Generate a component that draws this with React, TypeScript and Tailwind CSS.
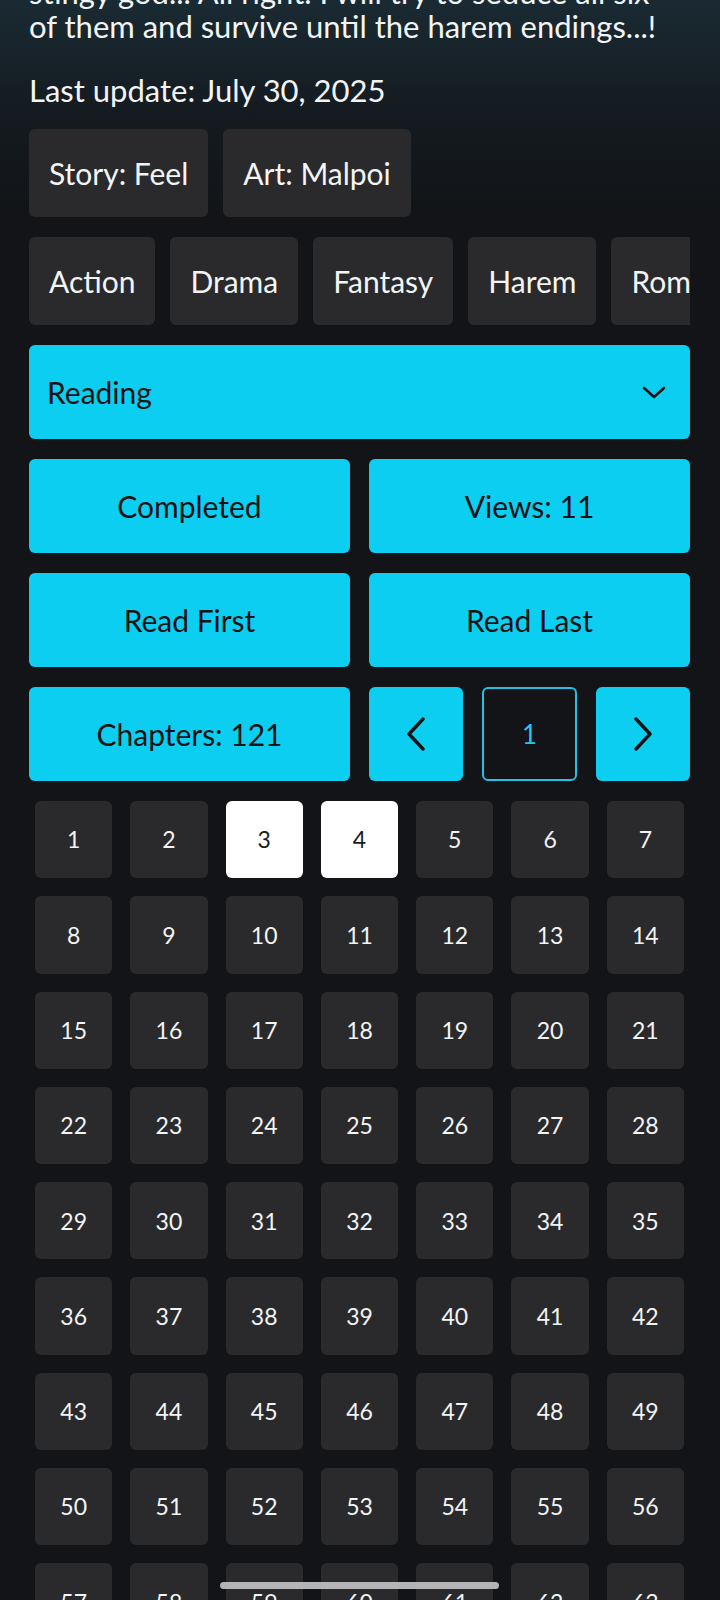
const GENRES = ['Action', 'Drama', 'Fantasy', 'Harem', 'Romance']
const CHAPTERS = Array.from({ length: 121 }, (_, i) => i + 1)
const READ = [3, 4]

function ChevronDown() {
  return (
    <svg width="24" height="13" viewBox="0 0 24 13" fill="none">
      <path d="M2 2L12 11L22 2" stroke="#101214" strokeWidth="2.6" strokeLinecap="round" strokeLinejoin="round" />
    </svg>
  )
}

function Chevron({ dir }: { dir: 'left' | 'right' }) {
  return (
    <svg width="20" height="34" viewBox="0 0 20 34" fill="none">
      <path
        d={dir === 'left' ? 'M17 2L3 17L17 32' : 'M3 2L17 17L3 32'}
        stroke="#101214"
        strokeWidth="3.4"
        strokeLinecap="round"
        strokeLinejoin="round"
      />
    </svg>
  )
}

export default function App() {
  return (
    <div className="relative h-[1600px] overflow-hidden bg-[linear-gradient(to_bottom,#1a2a33_0px,#141a1f_120px,#121417_220px)] font-['Lato',sans-serif] text-[30px] text-[#f3f4f5]">
      <div className="pl-[29px] pr-[30px]">
        <p className="-mt-[25px] text-[31px] leading-[34px]">
          <span className="block whitespace-nowrap">stingy god... All right. I will try to seduce all six</span>
          <span className="block whitespace-nowrap">of them and survive until the harem endings...!</span>
        </p>
        <p className="mt-[30px] text-[31px] leading-[34px]">Last update: July 30, 2025</p>

        <div className="mt-[22px] flex flex-col gap-5">
          <div className="flex gap-[15px]">
            <div className="flex h-[88px] items-center rounded-md bg-[#2a2a2c] px-5">Story: Feel</div>
            <div className="flex h-[88px] items-center rounded-md bg-[#2a2a2c] px-5">Art: Malpoi</div>
          </div>

          <div className="flex gap-[15px] overflow-hidden">
            {GENRES.map((g) => (
              <div key={g} className="flex h-[88px] shrink-0 items-center rounded-md bg-[#2a2a2c] px-5">
                {g}
              </div>
            ))}
          </div>

          <div className="flex h-[94px] items-center justify-between rounded-md bg-[#0ccef0] pl-[18px] pr-6 text-[#101214]">
            <span>Reading</span>
            <ChevronDown />
          </div>

          <div className="grid grid-cols-2 gap-[19px] text-[#101214]">
            <div className="flex h-[94px] items-center justify-center rounded-md bg-[#0ccef0]">Completed</div>
            <div className="flex h-[94px] items-center justify-center rounded-md bg-[#0ccef0]">Views: 11</div>
          </div>

          <div className="grid grid-cols-2 gap-[19px] text-[#101214]">
            <div className="flex h-[94px] items-center justify-center rounded-md bg-[#0ccef0]">Read First</div>
            <div className="flex h-[94px] items-center justify-center rounded-md bg-[#0ccef0]">Read Last</div>
          </div>

          <div className="grid grid-cols-2 gap-[19px] text-[#101214]">
            <div className="flex h-[94px] items-center justify-center rounded-md bg-[#0ccef0]">Chapters: 121</div>
            <div className="grid grid-cols-3 gap-[19px]">
              <div className="flex h-[94px] items-center justify-center rounded-md bg-[#0ccef0]">
                <Chevron dir="left" />
              </div>
              <div className="flex h-[94px] items-center justify-center rounded-md border-2 border-[#22c2e4] text-[26px] text-[#1fc9ee]">
                1
              </div>
              <div className="flex h-[94px] items-center justify-center rounded-md bg-[#0ccef0]">
                <Chevron dir="right" />
              </div>
            </div>
          </div>

          <div className="grid grid-cols-7 gap-[18px] px-[6px] text-[23px]">
            {CHAPTERS.map((n) => (
              <div
                key={n}
                className={
                  READ.includes(n)
                    ? 'flex aspect-square items-center justify-center rounded-md bg-white text-[#1c1c1e]'
                    : 'flex aspect-square items-center justify-center rounded-md bg-[#2a2a2c] text-[#f3f4f5]'
                }
              >
                {n}
              </div>
            ))}
          </div>
        </div>
      </div>

      <div className="absolute bottom-[11px] left-[220px] h-[7px] w-[279px] rounded-full bg-[#c4c4c6]/90" />
    </div>
  )
}
